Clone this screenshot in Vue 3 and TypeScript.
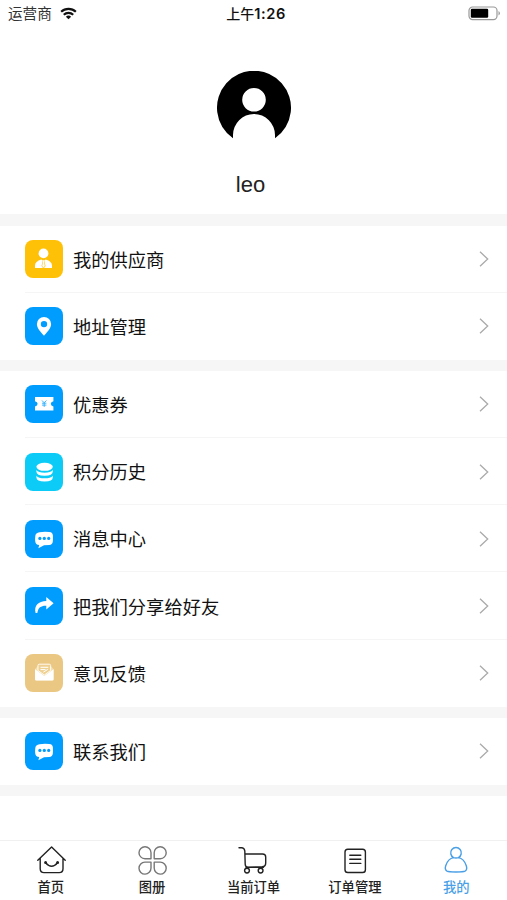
<script setup lang="ts">
type IconName = 'supplier' | 'pin' | 'coupon' | 'coins' | 'chat' | 'share' | 'mail'
type TabIcon = 'home' | 'album' | 'cart' | 'orders' | 'user'

interface MenuItem {
  label: string
  icon: IconName
  tone: 'amber' | 'blue' | 'cyan' | 'sand'
}

interface Tab {
  label: string
  icon: TabIcon
  active?: boolean
}

const groups: MenuItem[][] = [
  [
    { label: '我的供应商', icon: 'supplier', tone: 'amber' },
    { label: '地址管理', icon: 'pin', tone: 'blue' },
  ],
  [
    { label: '优惠券', icon: 'coupon', tone: 'blue' },
    { label: '积分历史', icon: 'coins', tone: 'cyan' },
    { label: '消息中心', icon: 'chat', tone: 'blue' },
    { label: '把我们分享给好友', icon: 'share', tone: 'blue' },
    { label: '意见反馈', icon: 'mail', tone: 'sand' },
  ],
  [{ label: '联系我们', icon: 'chat', tone: 'blue' }],
]

const tabs: Tab[] = [
  { label: '首页', icon: 'home' },
  { label: '图册', icon: 'album' },
  { label: '当前订单', icon: 'cart' },
  { label: '订单管理', icon: 'orders' },
  { label: '我的', icon: 'user', active: true },
]
</script>

<template>
  <div class="screen">
    <header class="status">
      <div class="carrier">
        <span>运营商</span>
        <svg class="wifi" viewBox="0 0 18 13" fill="none" stroke="#111" stroke-width="2.3">
          <path d="M1.2 4.7a11.3 11.3 0 0 1 15.6 0" />
          <path d="M4 7.8a7.3 7.3 0 0 1 10 0" />
          <path d="M9 12.6 6.2 9.9a4 4 0 0 1 5.6 0z" fill="#111" stroke="none" />
        </svg>
      </div>
      <div class="time">上午<span class="digits">1:26</span></div>
      <div class="power">
        <svg class="battery" viewBox="0 0 33 15">
          <rect x="1" y="1" width="28" height="12.6" rx="3.6" fill="#fff" stroke="#999" stroke-width="1.2" />
          <rect x="2.8" y="2.8" width="17.4" height="9" rx="1.2" fill="#000" />
          <path d="M30.5 5v4.6q1.4-.8 1.4-2.3t-1.4-2.3z" fill="#999" />
        </svg>
      </div>
    </header>

    <section class="profile">
      <svg class="avatar" viewBox="0 0 74 74">
        <path
          fill="#000"
          fill-rule="evenodd"
          d="M16 67.2A37 37 0 1 1 58 67.2V64a21 21 0 0 0-42 0zM37 17a11.8 11.8 0 1 0 0 23.6 11.8 11.8 0 0 0 0-23.6z"
        />
      </svg>
      <div class="name">leo</div>
    </section>

    <main class="menu">
      <ul v-for="(group, g) in groups" :key="g" class="group">
        <li v-for="item in group" :key="item.label" class="row">
          <span class="badge" :class="item.tone">
            <svg viewBox="0 0 38 38" fill="#fff">
              <template v-if="item.icon === 'supplier'">
                <circle cx="18.5" cy="13.4" r="4.9" />
                <path d="M10 28v-2.500c0-3 2.200-4.800 6.300-6.100l1.500 1.100-1.300 5.600 1.500 1.900zM27 28v-2.500c0-3-2.200-4.800-6.300-6.100l-1.500 1.100 1.300 5.600-1.500 1.900z" />
                <path d="M17.700 20.200h1.600l-.3 1.300.8 4.600-1.300 1.600-1.300-1.600.8-4.600z" />
              </template>
              <path
                v-else-if="item.icon === 'pin'"
                fill-rule="evenodd"
                d="M19 10a7.1 7.1 0 0 0-7.1 7.1c0 4.1 3.5 7.8 7.1 11.6 3.6-3.8 7.1-7.5 7.1-11.6A7.1 7.1 0 0 0 19 10zm0 3.9a3.2 3.2 0 1 1 0 6.4 3.2 3.2 0 0 1 0-6.4z"
              />
              <template v-else-if="item.icon === 'coupon'">
                <path d="M10 12h18.400v4.200q-2.600.5-2.600 2.600t2.600 2.600v4.200H10v-4.200q2.600-.5 2.600-2.600T10 16.200z" />
                <path d="m17 15.500 2.200 2.300 2.200-2.300M17 18.200h4.400M17 20.100h4.400M19.200 17.800v4.100" fill="none" stroke="#2aaeff" stroke-width=".9" />
              </template>
              <template v-else-if="item.icon === 'coins'">
                <ellipse cx="19.6" cy="13.8" rx="8.2" ry="4" />
                <path d="M11.400 17.100q2 2.600 8.200 2.600t8.200-2.600v1.500q0 4.200-8.200 4.200t-8.200-4.200z" />
                <path d="M11.400 22.700q2 2.600 8.200 2.600t8.200-2.600v1.500q0 4.400-8.200 4.400t-8.200-4.400z" />
              </template>
              <template v-else-if="item.icon === 'chat'">
                <path d="M14.500 12.300q4.500-1 9.800-.3 3.500.4 3.600 3.600.2 3.400-.1 6.200-.4 3-3.500 3.200l-5.300.3-5.600 3 .8-3.200q-3.700-.2-4-3.800-.2-2.500.1-5.300.3-3 4.200-3.700z" />
                <g fill="#009dff">
                  <circle cx="14.900" cy="18.400" r="1.600" />
                  <circle cx="19.300" cy="18.400" r="1.600" />
                  <circle cx="23.700" cy="18.400" r="1.600" />
                </g>
              </template>
              <path
                v-else-if="item.icon === 'share'"
                d="M21.300 10 28.600 16.200l-7.300 6.200v-3.600c-5.200-.2-8 1.600-9 7.200h-1.700c-1.800-7.400 2.700-12 10.700-12.100z"
              />
              <template v-else>
                <path d="M13.400 11.200 10 15.200v10q0 1.400 1.400 1.400h15.800q1.400 0 1.400-1.400v-10l-3.400-4z" fill="#f4dfae" />
                <path d="M10 15.200 19.300 22l9.300-6.800v10q0 1.400-1.400 1.400H11.400q-1.400 0-1.400-1.400z" />
                <path d="M13 16.500v-5q0-1.300 1.300-1.300h10q1.300 0 1.300 1.300v5l-6.300 4.500z" fill="#efd091" stroke="#fff" stroke-width=".9" />
                <path d="M15.500 13.300h7.800M15.500 15.600h5M18.300 18.200l4.500-2.800" fill="none" stroke="#fff" stroke-width="1" />
              </template>
            </svg>
          </span>
          <div class="cell">
            <span class="label">{{ item.label }}</span>
            <svg class="chevron" viewBox="0 0 10 16" fill="none" stroke="#aaa" stroke-width="1.300">
              <path d="m1 .8 7.700 7.200L1 15.200" />
            </svg>
          </div>
        </li>
      </ul>
    </main>

    <nav class="tabs">
      <a v-for="tab in tabs" :key="tab.label" class="tab" :class="{ active: tab.active }">
        <svg viewBox="0 0 30 30" fill="none" stroke="currentColor" stroke-width="1.400" stroke-linecap="round" stroke-linejoin="round">
          <template v-if="tab.icon === 'home'">
            <path d="M1.800 15.200 15.600 2l13.600 13.200M4.200 13.200v10.600q0 3.800 3.800 3.800h15.200q3.800 0 3.800-3.800V13.200" />
            <path d="M9.600 17.800q6 7 12 0" />
            <circle cx="9.600" cy="17.600" r=".8" fill="currentColor" />
            <circle cx="21.600" cy="17.600" r=".8" fill="currentColor" />
          </template>
          <g v-else-if="tab.icon === 'album'" stroke="#777">
            <path d="M14 13.700H7.900a6 6 0 1 1 6.100-6z" />
            <path d="M17.200 13.700h6.100a6 6 0 1 0-6.100-6z" />
            <path d="M14 17.100H7.900a6 6 0 1 0 6.100 6z" />
            <path d="M17.200 17.100h6.100a6 6 0 1 1-6.100 6z" />
          </g>
          <template v-else-if="tab.icon === 'cart'">
            <path d="M1 2.800h2.600q2.600 0 3.200 3l.4 13.500q.1 3 2.800 3h15.500M6.900 9H24.500q3.200 0 3.200 3v6q0 3.600-3.500 3.800L8 22.300" />
            <circle cx="9" cy="25.600" r="2.400" />
            <circle cx="22.600" cy="25.600" r="2.400" />
          </template>
          <template v-else-if="tab.icon === 'orders'">
            <rect x="5" y="4.300" width="20.400" height="23.200" rx="2.800" />
            <path d="M9.800 10.200h11M9.800 14.300h11M9.800 18.400h11" />
          </template>
          <template v-else>
            <path d="M12.600 12.600a5.300 5.300 0 1 1 4.800 0M12.600 12.600Q7 13.500 4.700 20.800q-1.200 4 1.300 5.400 1.600.8 9 .8t9-.8q2.500-1.400 1.300-5.400Q23 13.500 17.400 12.600 15 13.500 12.600 12.600" />
          </template>
        </svg>
        <span>{{ tab.label }}</span>
      </a>
    </nav>
  </div>
</template>

<style>
body {
  margin: 0;
  background: #fff;
}
</style>

<style scoped>
.screen {
  display: flex;
  flex-direction: column;
  width: 100%;
  height: 900px;
  overflow: hidden;
  background: #fff;
  color: #111;
  font-family: 'Liberation Sans', 'Noto Sans CJK SC', sans-serif;
}

.status {
  display: grid;
  grid-template-columns: 1fr auto 1fr;
  align-items: center;
  height: 27px;
  padding: 0 6px 0 8px;
  font-size: 14.600px;
  line-height: 26px;
  box-sizing: border-box;
}

.carrier {
  display: flex;
  align-items: center;
  gap: 8px;
  color: #333;
}

.wifi {
  width: 17px;
  height: 13px;
}

.time {
  padding-left: 3px;
  font-family: Inter, 'Noto Sans CJK SC', sans-serif;
  font-size: 14px;
  font-weight: 500;
  white-space: nowrap;
}

.digits {
  font-weight: 600;
  font-size: 14.600px;
  letter-spacing: 0.600px;
}

.power {
  display: flex;
  justify-content: flex-end;
}

.battery {
  width: 33px;
  height: 15px;
}

.profile {
  display: flex;
  flex-direction: column;
  align-items: center;
  flex: none;
  height: 187px;
  padding-top: 44px;
  box-sizing: border-box;
}

.avatar {
  width: 74px;
  height: 74px;
}

.name {
  margin: 27px 6px 0 0;
  font-family: 'Liberation Sans', sans-serif;
  font-size: 22px;
  line-height: 26px;
  color: #222;
}

.menu {
  display: flex;
  flex-direction: column;
  flex: none;
  gap: 11px;
  padding: 11.500px 0 11px;
  background: #f6f6f6;
}

.group {
  margin: 0;
  padding: 0;
  list-style: none;
  background: #fff;
}

.row {
  display: flex;
  align-items: center;
  gap: 10px;
  height: 67.200px;
  padding-left: 25px;
  background: linear-gradient(#f5f5f5, #f5f5f5) 25px 100% / 100% 1px no-repeat;
}

.row:last-child {
  background: none;
}

.badge {
  flex: none;
  width: 38px;
  height: 38px;
  border-radius: 8px;
}

.badge svg {
  display: block;
  width: 38px;
  height: 38px;
}

.amber {
  background: #ffc107;
}

.blue {
  background: #009dff;
}

.cyan {
  background: #0cccf7;
}

.sand {
  background: #eac883;
}

.cell {
  display: flex;
  flex: 1;
  align-items: center;
  justify-content: space-between;
  padding-right: 18px;
}

.label {
  padding-top: 3px;
  font-size: 18.300px;
  line-height: 28px;
}

.chevron {
  width: 10px;
  height: 16px;
}

.tabs {
  display: grid;
  grid-template-columns: repeat(5, 1fr);
  height: 60px;
  margin-top: auto;
  border-top: 1px solid #f0f0f0;
  box-sizing: border-box;
}

.tab {
  display: flex;
  flex-direction: column;
  align-items: center;
  padding-top: 4px;
  font-size: 13.300px;
  line-height: 20px;
  font-weight: 500;
  color: #222;
}

.tab svg {
  width: 30px;
  height: 30px;
  margin-bottom: 3px;
}

.tab.active {
  color: #4a9fe6;
}
</style>
